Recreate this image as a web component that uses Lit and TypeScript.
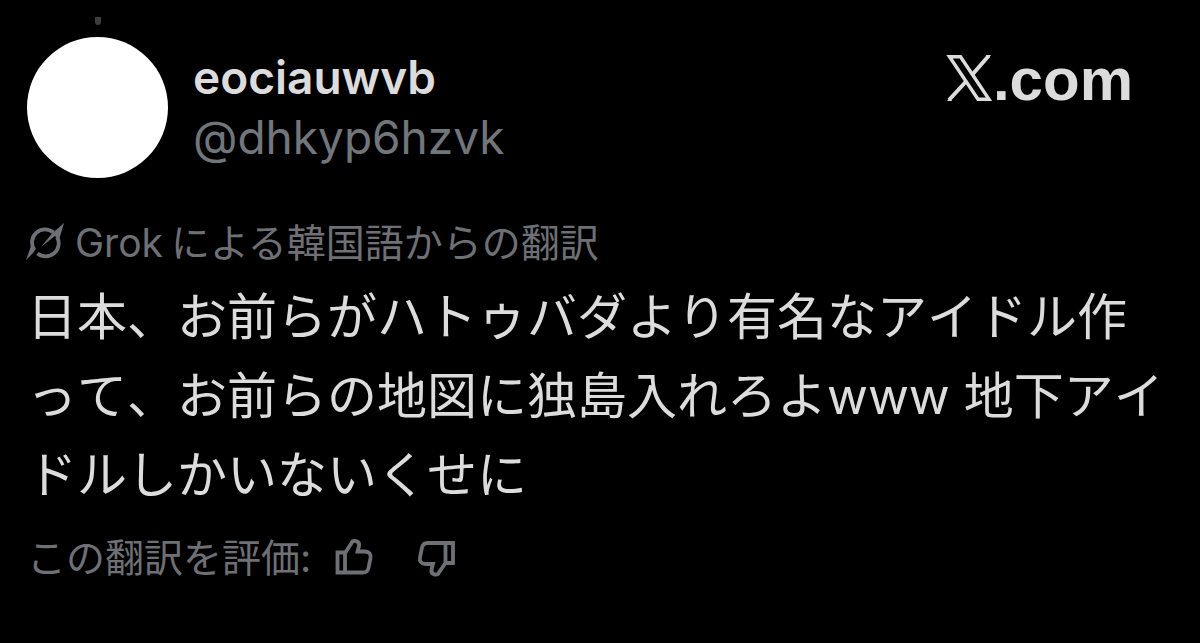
import { LitElement, html, css } from "lit";
import { customElement, state } from "lit/decorators.js";

@customElement("app-root")
export class AppRoot extends LitElement {
  @state() private rating: "up" | "down" | null = null;

  static styles = css`
    :host {
      display: block;
      min-height: 100vh;
      box-sizing: border-box;
      background: #000;
      color: #dcdcdc;
      font-family: Inter, "Noto Sans CJK JP", sans-serif;
    }
    .post {
      padding: 17px 27px 32px;
    }
    .head {
      display: flex;
      align-items: flex-end;
      gap: 25px;
    }
    .rail {
      display: flex;
      flex-direction: column;
      align-items: center;
      gap: 12px;
    }
    .thread {
      width: 6px;
      height: 8px;
      border-radius: 0 0 3px 3px;
      background: #3c3d40;
    }
    .avatar {
      width: 141px;
      height: 141px;
      border-radius: 50%;
      background: #fff;
    }
    .names {
      display: flex;
      flex-direction: column;
      flex: 1;
      padding-bottom: 11px;
    }
    .name {
      font-size: 46px;
      line-height: 60px;
      font-weight: 600;
    }
    .handle {
      font-size: 46px;
      line-height: 60px;
      color: #71767b;
    }
    .brand {
      display: flex;
      align-items: flex-start;
      align-self: flex-start;
      padding: 38px 40px 0 0;
      color: #dcdcdc;
      text-decoration: none;
      font: 700 60px/50px "Liberation Sans", Arial, sans-serif;
    }
    .source {
      display: flex;
      align-items: center;
      gap: 10px;
      padding-top: 36px;
      font-size: 39px;
      line-height: 58px;
      color: #6e7075;
    }
    .engine {
      margin-right: 8px;
    }
    .text {
      margin: 0;
      padding: 6px 0 14px;
      font-size: 50px;
      line-height: 79px;
      font-kerning: none;
    }
    .rate {
      display: flex;
      align-items: center;
      font-size: 39px;
      line-height: 58px;
      color: #6e7075;
    }
    .votes {
      display: flex;
      gap: 44px;
      padding-left: 24px;
    }
    .vote {
      display: flex;
      padding: 0;
      border: 0;
      background: none;
      color: inherit;
      cursor: pointer;
    }
    svg {
      display: block;
      flex: none;
      overflow: visible;
    }
  `;

  render() {
    return html`
      <article class="post">
        <header class="head">
          <div class="rail">
            <div class="thread"></div>
            <div class="avatar"></div>
          </div>
          <div class="names">
            <span class="name">eociauwvb</span>
            <span class="handle">@dhkyp6hzvk</span>
          </div>
          <a class="brand" href="#" aria-label="X.com">
            <svg width="46" height="46" viewBox="0 0 46 46" fill="none" stroke="currentColor" stroke-width="3.4">
              <path d="M2.500 1.700H13.500L42 44.300H31Z" />
              <path d="M25 20L41.500 1M19.500 26L2 45" stroke-width="4" />
              <path d="M38.500 0H44L42 3ZM0 46H5L3 42.500Z" fill="currentColor" stroke="none" />
            </svg>
            <span>.com</span>
          </a>
        </header>
        <div class="source">
          <svg width="38" height="38" viewBox="0 1 38 38" fill="none" stroke="currentColor" stroke-width="3.8">
            <path d="M7.500 27A13 13 0 0 1 26.500 9.500M30 14A13 13 0 0 1 10.500 30.500" />
            <path d="M37 0L32 17L28 13L14 24L25 10.500Z M-1 37L4 23L8 26.500L7 29Z" fill="currentColor" stroke="none" />
          </svg>
          <span><span class="engine">Grok</span>による韓国語からの翻訳</span>
        </div>
        <p class="text">日本、お前らがハトゥバダより有名なアイドル作って、お前らの地図に独島入れろよwww 地下アイドルしかいないくせに</p>
        <footer class="rate">
          <span>この翻訳を評価:</span>
          <div class="votes">
            <button class="vote" aria-label="良い" aria-pressed=${this.rating === "up"} @click=${() => (this.rating = "up")}>
              <svg width="38" height="38" viewBox="0 0 38 38" fill="none" stroke="currentColor" stroke-width="3.8">
                <path d="M2.500 13.500H10V33.500H2.500ZM10 14L16.500 4C18 .5 25 1.500 24 7L22.500 12.500H30Q36.500 13 35.500 19L33.500 29Q32.500 33.500 28 33.500H10" />
              </svg>
            </button>
            <button class="vote" aria-label="悪い" aria-pressed=${this.rating === "down"} @click=${() => (this.rating = "down")}>
              <svg width="38" height="38" viewBox="0 0 38 38" fill="none" stroke="currentColor" stroke-width="3.8">
                <path d="M36 24H28.500V4H36ZM28.500 24L22 33.500C20.500 37 13.500 36 14.500 30.500L16 25H8.500Q2 24.500 3 18.500L5 8.500Q6 4 10.500 4H28.500" />
              </svg>
            </button>
          </div>
        </footer>
      </article>
    `;
  }
}
